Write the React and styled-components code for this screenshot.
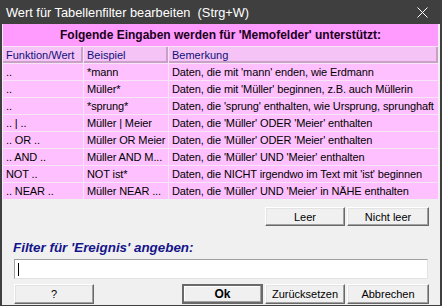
import React from "react";
import styled, { createGlobalStyle } from "styled-components";

const GlobalStyle = createGlobalStyle`
  html, body {
    margin: 0;
    padding: 0;
    background: #f0f0f0;
  }
  * {
    box-sizing: border-box;
  }
`;

const Window = styled.div`
  width: 442px;
  height: 306px;
  display: flex;
  flex-direction: column;
  background: #f0f0f0;
  border: 2px solid #3f3f3f;
  border-top: none;
  border-bottom-width: 1px;
  font-family: "Liberation Sans", Arial, sans-serif;
  font-size: 11px;
  color: #000;
  overflow: hidden;
`;

const TitleBar = styled.div`
  flex: none;
  height: 24px;
  margin: 0 -2px;
  padding: 0 0 0 6px;
  display: flex;
  align-items: center;
  justify-content: space-between;
  background: #3f3f3f;
  color: #ffffff;
  font-size: 12.8px;
  white-space: pre;
`;

const CloseButton = styled.div`
  width: 40px;
  height: 24px;
  display: flex;
  align-items: center;
  justify-content: center;
`;

const Body = styled.div`
  flex: 1;
  display: flex;
  flex-direction: column;
  padding: 0 2px 0 1px;
`;

const Table = styled.div`
  display: grid;
  grid-template-columns: 80px 84px 1fr;
  grid-template-rows: 22px;
  grid-auto-rows: 16px;
  gap: 1px;
  background: #f7e4f7;
`;

const Caption = styled.div`
  grid-column: 1 / -1;
  display: flex;
  align-items: center;
  justify-content: center;
  background: #ff9aff;
  font-weight: bold;
  font-size: 12px;
  color: #1a001a;
`;

const HeadCell = styled.div`
  padding: 0 3px;
  line-height: 16px;
  background: #f5c3f5;
  color: #10107a;
  box-shadow: inset -2px -2px #c8a0c8;
  white-space: nowrap;
  overflow: hidden;
`;

const Cell = styled.div`
  padding: 0 2px 0 3px;
  line-height: 16px;
  background: #ffc0ff;
  letter-spacing: -0.12px;
  white-space: nowrap;
  overflow: hidden;
`;

const ButtonRow = styled.div`
  display: flex;
  justify-content: ${(p) => (p.$spread ? "space-between" : "flex-end")};
  gap: 2px;
  margin: ${(p) => p.$margin};
  padding: 0 9px 0 11px;
`;

const Group = styled.div`
  display: flex;
  gap: 2px;
`;

const Button = styled.div`
  width: ${(p) => p.$width || 80}px;
  height: ${(p) => p.$height || 20}px;
  display: flex;
  align-items: center;
  justify-content: center;
  background: #f0f0f0;
  border: 1px solid;
  border-color: #ffffff #696969 #696969 #ffffff;
  box-shadow: inset -1px -1px #a0a0a0, inset 1px 1px #e3e3e3;
  font-weight: ${(p) => (p.$default ? "bold" : "normal")};
  font-size: ${(p) => (p.$default ? "12px" : "11px")};
  ${(p) =>
    p.$default &&
    `
    border: 2px solid #696969;
    box-shadow: inset -1px -1px #a0a0a0, inset 1px 1px #ffffff;
  `}
`;

const Label = styled.div`
  margin: 14px 0 0 10px;
  font-weight: bold;
  font-style: italic;
  font-size: 13.4px;
  color: #14148a;
  line-height: 16px;
`;

const Field = styled.div`
  margin: 3px 10px 0 11px;
  height: 20px;
  display: flex;
  align-items: center;
  padding-left: 3px;
  background: #ffffff;
  border: 1px solid;
  border-color: #a0a0a0 #e3e3e3 #e3e3e3 #a0a0a0;
`;

const Caret = styled.span`
  width: 1px;
  height: 13px;
  background: #000;
`;

const rows = [
  ["..", "*mann", "Daten, die mit 'mann' enden, wie Erdmann"],
  ["..", "Müller*", "Daten, die mit 'Müller' beginnen, z.B. auch Müllerin"],
  ["..", "*sprung*", "Daten, die 'sprung' enthalten, wie Ursprung, sprunghaft"],
  [".. | ..", "Müller | Meier", "Daten, die 'Müller' ODER 'Meier' enthalten"],
  [".. OR ..", "Müller OR Meier", "Daten, die 'Müller' ODER 'Meier' enthalten"],
  [".. AND ..", "Müller AND M...", "Daten, die 'Müller' UND 'Meier' enthalten"],
  ["NOT ..", "NOT ist*", "Daten, die NICHT irgendwo im Text mit 'ist' beginnen"],
  [".. NEAR ..", "Müller NEAR ...", "Daten, die 'Müller' UND 'Meier' in NÄHE enthalten"],
];

export default function App() {
  return (
    <>
      <GlobalStyle />
      <Window>
        <TitleBar>
          <span>Wert für Tabellenfilter bearbeiten  (Strg+W)</span>
          <CloseButton>
            <svg width="11" height="11" viewBox="0 0 11 11">
              <path d="M0.5 0.5 L10.5 10.5 M10.5 0.5 L0.5 10.5" stroke="#ffffff" strokeWidth="1" />
            </svg>
          </CloseButton>
        </TitleBar>
        <Body>
          <Table>
            <Caption>Folgende Eingaben werden für 'Memofelder' unterstützt:</Caption>
            <HeadCell>Funktion/Wert</HeadCell>
            <HeadCell>Beispiel</HeadCell>
            <HeadCell>Bemerkung</HeadCell>
            {rows.map((r, i) =>
              r.map((c, j) => <Cell key={i + "-" + j}>{c}</Cell>)
            )}
          </Table>
          <ButtonRow $margin="8px 0 0 0">
            <Button $height={19}>Leer</Button>
            <Button $height={19} $width={82}>Nicht leer</Button>
          </ButtonRow>
          <Label>Filter für 'Ereignis' angeben:</Label>
          <Field>
            <Caret />
          </Field>
          <ButtonRow $spread $margin="5px 0 0 0">
            <Button>?</Button>
            <Group>
              <Button $default $width={81}>Ok</Button>
              <Button>Zurücksetzen</Button>
              <Button $width={82}>Abbrechen</Button>
            </Group>
          </ButtonRow>
        </Body>
      </Window>
    </>
  );
}
